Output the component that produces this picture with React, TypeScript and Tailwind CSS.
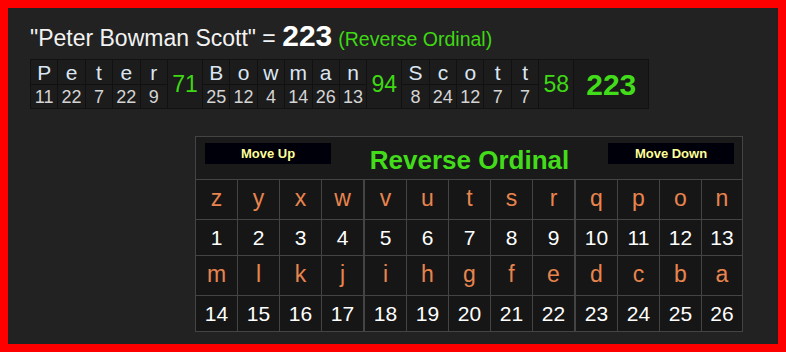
import React from "react";

const words = [
  { letters: ["P", "e", "t", "e", "r"], values: [11, 22, 7, 22, 9], sum: 71 },
  { letters: ["B", "o", "w", "m", "a", "n"], values: [25, 12, 4, 14, 26, 13], sum: 94 },
  { letters: ["S", "c", "o", "t", "t"], values: [8, 24, 12, 7, 7], sum: 58 },
];

const rows = [
  "zyxwvutsrqpon".split(""),
  "mlkjihgfedcba".split(""),
];

function WordBreakdown() {
  return (
    <div className="ml-[22px] mt-[5px] flex w-max gap-px bg-[#111] p-px">
      {words.map((word, wi) => (
        <React.Fragment key={wi}>
          {word.letters.map((ch, i) => (
            <div key={i} className="flex w-[26.4px] flex-col gap-px">
              <div className="flex h-[24px] items-center justify-center bg-[#1c1c1c] text-[21px] leading-none text-[#dbe6f2]">
                {ch}
              </div>
              <div className="flex h-[23px] items-center justify-center bg-[#1c1c1c] text-[18px] leading-none text-[#d4d4d4]">
                {word.values[i]}
              </div>
            </div>
          ))}
          <div className="flex w-[34px] items-center justify-center bg-[#1c1c1c] text-[23px] text-[#3fd814]">
            {word.sum}
          </div>
        </React.Fragment>
      ))}
      <div className="flex w-[74px] items-center justify-center bg-[#1a1a1a] text-[30px] font-bold text-[#43dc1a]">
        223
      </div>
    </div>
  );
}

function cellClass(col: number) {
  return col === 4 || col === 9 ? "border-l border-[#444]" : "";
}

const colTemplate =
  "grid-cols-[41px_41px_41px_41px_42px_41px_41px_41px_41px_42px_41px_41px_40px]";

function CipherTable() {
  return (
    <div
      className={`ml-[187px] mt-[27px] grid w-max ${colTemplate} gap-px border border-[#444] bg-[#444]`}
    >
      <div className="col-span-13 flex h-[42px] items-start justify-between bg-[#1a1a1a] pl-[9px] pr-[8px] pt-[6px]">
        <div className="flex h-[21px] w-[126px] items-center justify-center bg-[#00000a] text-[13px] font-bold text-[#ffff99]">
          Move Up
        </div>
        <div className="mt-[2px] text-[26px] font-bold leading-[30px] text-[#43dc1a]">
          Reverse Ordinal
        </div>
        <div className="flex h-[21px] w-[126px] items-center justify-center bg-[#00000a] text-[13px] font-bold text-[#ffff99]">
          Move Down
        </div>
      </div>
      {rows.map((letters, ri) => (
        <React.Fragment key={ri}>
          {letters.map((ch, ci) => (
            <div
              key={`l${ci}`}
              className={`flex h-[39px] items-center justify-center bg-[#161616] pb-[2px] text-[23px] text-[#e8844e] ${cellClass(ci)}`}
            >
              {ch}
            </div>
          ))}
          {letters.map((_, ci) => (
            <div
              key={`n${ci}`}
              className={`flex h-[35px] items-center justify-center bg-[#161616] text-[21px] text-white ${cellClass(ci)}`}
            >
              {ri * 13 + ci + 1}
            </div>
          ))}
        </React.Fragment>
      ))}
    </div>
  );
}

export default function App() {
  return (
    <div className="h-[352px] w-[786px] overflow-hidden border-8 border-[#ff0000] bg-[#222] font-['Liberation_Sans',Arial,sans-serif]">
      <div className="ml-[22px] mt-[13px] flex items-baseline whitespace-nowrap leading-[30px] text-[#f2f2f2]">
        <span className="text-[23px]">"Peter Bowman Scott" =&nbsp;</span>
        <span className="text-[30px] font-bold text-white">223</span>
        <span className="ml-[6px] text-[19.5px] text-[#3fd814]">(Reverse Ordinal)</span>
      </div>
      <WordBreakdown />
      <CipherTable />
    </div>
  );
}
